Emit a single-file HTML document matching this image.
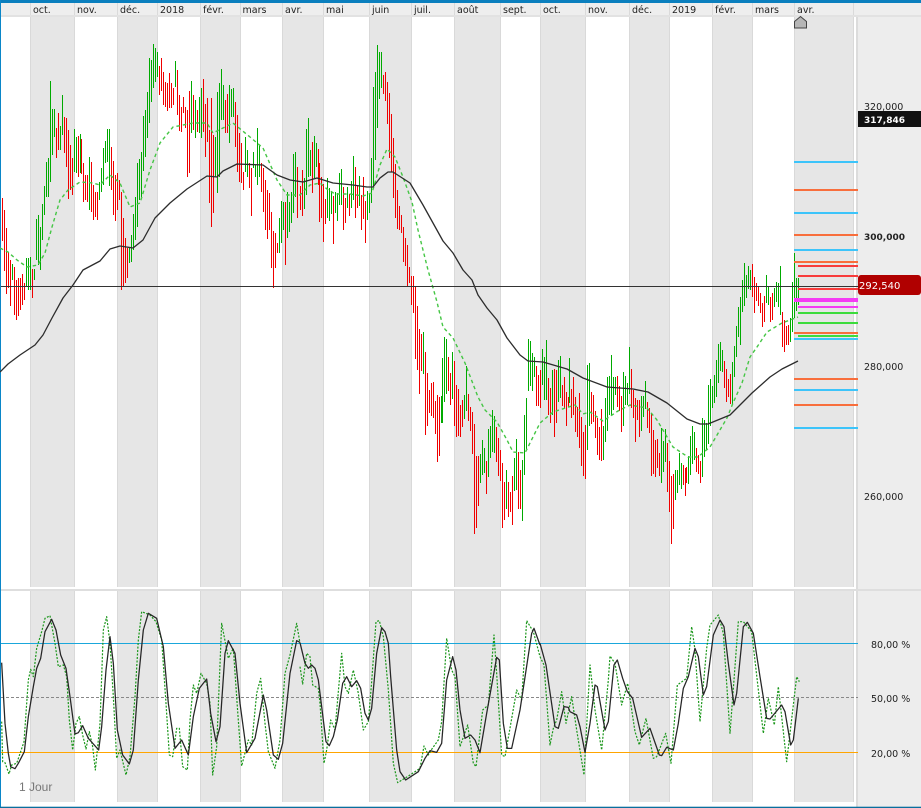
<!DOCTYPE html>
<html><head><meta charset="utf-8"><title>Chart</title>
<style>html,body{margin:0;padding:0;background:#fff;overflow:hidden}svg{display:block}
text{font-family:"DejaVu Sans","Liberation Sans",sans-serif;font-size:9.5px;fill:#222}</style></head>
<body>
<svg width="921" height="808" viewBox="0 0 921 808" xmlns="http://www.w3.org/2000/svg">
<rect width="921" height="808" fill="#fff"/>
<!-- bands -->
<g fill="#e6e6e6">
<rect x="30" y="16" width="45" height="571"/><rect x="117" y="16" width="41" height="571"/><rect x="200" y="16" width="41" height="571"/><rect x="282" y="16" width="42" height="571"/><rect x="369" y="16" width="43" height="571"/><rect x="454" y="16" width="47" height="571"/><rect x="540" y="16" width="46" height="571"/><rect x="629" y="16" width="41" height="571"/><rect x="712" y="16" width="41" height="571"/><rect x="794" y="16" width="60" height="571"/>
<rect x="30" y="591" width="45" height="211"/><rect x="117" y="591" width="41" height="211"/><rect x="200" y="591" width="41" height="211"/><rect x="282" y="591" width="42" height="211"/><rect x="369" y="591" width="43" height="211"/><rect x="454" y="591" width="47" height="211"/><rect x="540" y="591" width="46" height="211"/><rect x="629" y="591" width="41" height="211"/><rect x="712" y="591" width="41" height="211"/><rect x="794" y="591" width="60" height="211"/>
</g>
<path shape-rendering="crispEdges" stroke="#d9d9d9" stroke-width="1" fill="none" d="M30.5 3V587M74.5 3V587M117.5 3V587M157.5 3V587M200.5 3V587M240.5 3V587M282.5 3V587M323.5 3V587M369.5 3V587M411.5 3V587M454.5 3V587M500.5 3V587M540.5 3V587M585.5 3V587M629.5 3V587M669.5 3V587M712.5 3V587M752.5 3V587M794.5 3V587M853.5 3V587M30.5 591V802M74.5 591V802M117.5 591V802M157.5 591V802M200.5 591V802M240.5 591V802M282.5 591V802M323.5 591V802M369.5 591V802M411.5 591V802M454.5 591V802M500.5 591V802M540.5 591V802M585.5 591V802M629.5 591V802M669.5 591V802M712.5 591V802M752.5 591V802M794.5 591V802M853.5 591V802"/>
<!-- panels and axis -->
<rect x="858" y="3" width="63" height="804" fill="#ededed"/>
<rect x="856" y="3" width="2" height="804" fill="#dcdcdc"/>
<rect x="1" y="3" width="920" height="12" fill="#eeeeee"/>
<rect x="1" y="15" width="920" height="2" fill="#e2e2e2"/>
<path shape-rendering="crispEdges" stroke="#dadada" d="M30.5 3V15M74.5 3V15M117.5 3V15M157.5 3V15M200.5 3V15M240.5 3V15M282.5 3V15M323.5 3V15M369.5 3V15M411.5 3V15M454.5 3V15M500.5 3V15M540.5 3V15M585.5 3V15M629.5 3V15M669.5 3V15M712.5 3V15M752.5 3V15M794.5 3V15M853.5 3V15"/>
<rect x="1" y="589" width="920" height="2" fill="#dedede"/>
<rect x="0" y="0" width="921" height="3" fill="#0a7fbe"/>
<rect x="0" y="0" width="1" height="808" fill="#0a86c8"/>
<rect x="0" y="806.7" width="921" height="1.3" fill="#0a6f9e"/>
<g>
<text x="33" y="13">oct.</text><text x="77" y="13">nov.</text><text x="120" y="13">déc.</text><text x="160" y="13">2018</text><text x="203" y="13">févr.</text><text x="242.5" y="13">mars</text><text x="285" y="13">avr.</text><text x="326" y="13">mai</text><text x="372" y="13">juin</text><text x="414" y="13">juil.</text><text x="457" y="13">août</text><text x="503" y="13">sept.</text><text x="543" y="13">oct.</text><text x="588" y="13">nov.</text><text x="632" y="13">déc.</text><text x="672" y="13">2019</text><text x="715" y="13">févr.</text><text x="755" y="13">mars</text><text x="797" y="13">avr.</text>
</g>
<!-- bars -->
<path shape-rendering="crispEdges" fill="none" stroke="#f00000" stroke-width="1" d="M2.5 198V241M4.5 210V271M6.5 228V294M8.5 252V288M10.5 260V306M14.5 267V315M16.5 280V320M18.5 278V316M20.5 278V310M22.5 274V305M24.5 283V300M32.5 269V298M56.5 128V158M58.5 113V150M64.5 117V153M66.5 118V167M68.5 130V199M70.5 145V190M72.5 158V195M78.5 136V177M81.5 139V174M83.5 163V202M85.5 175V200M87.5 175V202M91.5 162V212M93.5 185V220M95.5 192V217M97.5 192V220M111.5 147V190M113.5 161V215M115.5 175V221M117.5 173V210M119.5 180V200M121.5 192V290M123.5 218V287M125.5 238V283M127.5 248V278M159.5 66V95M161.5 58V91M163.5 72V105M165.5 82V107M167.5 83V111M169.5 73V108M171.5 83V108M173.5 88V105M177.5 70V115M179.5 95V131M181.5 107V132M183.5 97V113M185.5 107V128M187.5 110V177M189.5 91V173M193.5 95V130M197.5 110V132M203.5 79V132M205.5 104V157M207.5 98V142M209.5 130V203M211.5 98V227M213.5 135V213M225.5 100V133M227.5 94V133M235.5 102V147M237.5 115V172M239.5 133V182M241.5 143V183M243.5 172V190M249.5 163V188M251.5 168V216M261.5 163V192M263.5 168V212M265.5 180V230M267.5 190V239M269.5 193V230M271.5 212V268M273.5 231V288M275.5 233V268M277.5 243V253M285.5 202V265M297.5 167V218M300.5 186V210M302.5 170V216M312.5 142V193M318.5 149V185M319.5 163V222M321.5 177V218M323.5 184V242M325.5 199V224M333.5 196V244M343.5 187V230M345.5 198V223M349.5 194V216M355.5 167V218M357.5 185V208M361.5 195V230M363.5 177V219M365.5 201V243M383.5 75V94M385.5 72V101M387.5 82V124M389.5 93V158M391.5 114V172M393.5 138V198M395.5 164V218M397.5 190V229M399.5 206V230M401.5 215V233M403.5 227V262M405.5 238V266M407.5 245V286M409.5 267V283M411.5 276V305M413.5 276V313M415.5 287V359M417.5 306V370M419.5 329V394M421.5 334V371M425.5 352V435M427.5 373V426M429.5 390V413M431.5 383V416M433.5 382V418M435.5 401V434M437.5 395V462M439.5 397V456M448.5 357V391M450.5 373V405M454.5 361V426M456.5 385V437M458.5 389V436M460.5 405V437M462.5 400V427M468.5 394V421M470.5 407V431M472.5 412V454M474.5 424V534M476.5 456V528M478.5 456V506M486.5 461V494M496.5 427V462M498.5 438V476M500.5 450V481M502.5 463V528M504.5 482V520M508.5 482V517M510.5 492V512M512.5 476V525M518.5 452V509M520.5 470V509M536.5 366V406M538.5 375V406M540.5 370V408M548.5 378V415M550.5 388V423M554.5 369V437M556.5 370V423M562.5 385V406M564.5 377V409M566.5 392V426M568.5 397V407M571.5 389V418M573.5 377V415M575.5 397V432M577.5 407V437M579.5 393V448M581.5 417V466M583.5 432V476M585.5 425V479M591.5 392V424M593.5 395V422M595.5 411V438M597.5 418V455M599.5 427V460M601.5 409V461M617.5 376V407M619.5 386V411M621.5 396V432M631.5 369V408M633.5 390V418M635.5 398V442M637.5 400V420M639.5 400V437M647.5 402V428M649.5 408V433M651.5 413V476M653.5 430V474M655.5 440V477M657.5 439V468M659.5 453V476M667.5 443V492M669.5 461V512M671.5 476V544M673.5 474V529M683.5 465V485M685.5 468V496M686.5 467V483M696.5 448V472M698.5 455V474M700.5 461V483M724.5 361V388M726.5 369V402M728.5 379V397M730.5 374V404M752.5 264V297M754.5 277V313M756.5 283V301M758.5 286V306M760.5 293V313M762.5 303V327M764.5 296V322M770.5 297V322M772.5 293V320M782.5 312V347M784.5 320V352M786.5 326V345M788.5 325V345"/>
<path shape-rendering="crispEdges" fill="none" stroke="#00aa00" stroke-width="1" d="M12.5 264V280M26.5 258V287M28.5 258V290M30.5 257V290M34.5 269V280M36.5 219V260M38.5 215V265M40.5 227V270M42.5 204V240M44.5 186V215M46.5 162V197M48.5 158V197M50.5 81V182M52.5 109V155M54.5 109V137M60.5 126V150M62.5 95V135M74.5 129V172M76.5 137V173M80.5 134V173M89.5 157V210M99.5 182V200M101.5 168V192M103.5 148V185M105.5 141V163M107.5 129V162M109.5 129V186M129.5 248V263M131.5 235V262M133.5 214V250M135.5 197V240M137.5 163V227M139.5 159V200M141.5 152V197M143.5 116V171M145.5 110V157M147.5 92V138M149.5 58V123M151.5 60V102M153.5 44V88M155.5 48V82M157.5 52V77M175.5 61V87M191.5 81V133M195.5 100V138M199.5 97V133M201.5 88V138M215.5 137V177M217.5 92V193M219.5 83V177M221.5 69V120M223.5 85V120M229.5 85V143M231.5 89V117M233.5 88V117M245.5 137V172M247.5 150V177M253.5 152V168M255.5 165V177M257.5 128V185M259.5 145V177M279.5 218V253M281.5 201V243M283.5 202V230M287.5 192V238M289.5 202V232M291.5 192V223M293.5 154V213M295.5 152V197M304.5 178V209M306.5 129V195M308.5 118V177M310.5 150V176M314.5 136V178M316.5 143V167M327.5 178V218M329.5 188V221M331.5 191V214M335.5 192V213M337.5 193V221M339.5 173V205M341.5 169V205M347.5 187V208M351.5 181V208M353.5 156V200M359.5 176V206M367.5 191V220M369.5 193V213M371.5 158V203M373.5 87V187M375.5 72V160M377.5 45V128M379.5 52V99M381.5 52V88M423.5 332V374M441.5 396V423M442.5 358V423M444.5 337V402M446.5 339V394M452.5 352V399M464.5 395V419M466.5 366V411M480.5 454V483M482.5 440V475M484.5 448V473M488.5 429V477M490.5 426V458M492.5 410V452M494.5 416V453M506.5 470V509M514.5 458V491M516.5 439V490M522.5 460V521M524.5 415V475M526.5 398V449M528.5 339V391M530.5 341V386M532.5 353V391M534.5 357V377M542.5 349V385M544.5 357V400M546.5 340V400M552.5 370V415M558.5 360V402M560.5 356V398M569.5 358V403M587.5 365V450M589.5 363V426M603.5 426V460M605.5 398V442M607.5 377V431M609.5 376V415M611.5 355V415M613.5 377V410M615.5 377V395M623.5 372V426M625.5 376V405M627.5 383V405M629.5 347V394M641.5 396V431M643.5 396V417M645.5 381V409M661.5 428V483M663.5 441V472M665.5 429V462M675.5 470V500M677.5 470V493M679.5 453V485M681.5 463V489M688.5 456V484M690.5 436V475M692.5 426V464M694.5 432V460M702.5 418V477M704.5 420V457M706.5 423V450M708.5 385V444M710.5 379V426M712.5 386V408M714.5 375V403M716.5 360V397M718.5 344V383M720.5 342V371M722.5 350V372M732.5 362V404M734.5 346V377M736.5 326V357M738.5 307V337M740.5 297V345M742.5 280V312M744.5 263V306M746.5 275V298M748.5 266V289M750.5 270V290M766.5 275V303M768.5 287V305M774.5 288V307M776.5 282V302M778.5 283V307M780.5 266V315M790.5 318V342M792.5 282V332M794.5 253V318M796.5 278V311M798.5 278V305"/>
<!-- short MA -->
<polyline fill="none" stroke="#45c645" stroke-width="1.4" stroke-dasharray="3.5 3" points="0,248 8,252 17,260 27,267 38,265 45,253 52,227 60,200 68,190 80,182 93,183 100,185 110,175 120,183 130,207 140,203 150,170 160,143 173,127 193,123 207,123 213,133 233,123 250,137 263,148 277,180 287,195 300,195 310,185 320,183 327,189 335,194 350,194 363,196 372,193 380,165 387,149 395,157 403,177 412,202 418,230 428,270 437,302 443,327 453,338 465,363 478,397 485,410 497,422 507,440 513,452 525,453 540,423 553,412 575,405 583,414 590,412 603,421 612,415 618,411 630,405 647,408 657,420 673,447 688,457 698,457 710,447 727,418 733,403 742,383 750,357 757,347 767,332 782,323 798,317"/>
<!-- long MA -->
<polyline fill="none" stroke="#2c2c2c" stroke-width="1.3" stroke-linejoin="round" points="0,372 8,364 20,355 35,345 43,335 52,318 63,298 73,285 83,270 100,261 110,249 120,246 133,248 143,240 155,218 170,203 187,189 207,176 217,177 223,171 237,164 263,165 277,175 290,180 303,182 317,178 333,183 353,185 367,187 373,187 380,178 388,172 393,172 410,183 423,205 443,241 453,253 463,270 472,280 478,295 487,308 497,320 507,338 520,355 528,361 543,362 567,369 583,378 607,387 633,389 648,392 667,403 687,419 700,424 708,424 730,415 752,393 770,377 782,369 798,361"/>
<rect x="1" y="286" width="857" height="1" fill="#333"/>
<!-- levels -->
<g shape-rendering="crispEdges">
<rect x="794" y="161" width="64" height="2" fill="#3cc4fa"/>
<rect x="794" y="189" width="64" height="2" fill="#f86e3c"/>
<rect x="794" y="212" width="64" height="2" fill="#3cc4fa"/>
<rect x="794" y="234" width="64" height="2" fill="#f86e3c"/>
<rect x="794" y="249" width="64" height="2" fill="#3cc4fa"/>
<rect x="794" y="261" width="64" height="2" fill="#f86e3c"/>
<rect x="798" y="265" width="60" height="2" fill="#f83c3c"/>
<rect x="798" y="275" width="60" height="2" fill="#f83c3c"/>
<rect x="798" y="288" width="60" height="2" fill="#f83c3c"/>
<rect x="794" y="298" width="64" height="4" fill="#f43cf4"/>
<rect x="798" y="306" width="60" height="2" fill="#f43cf4"/>
<rect x="798" y="312" width="60" height="2" fill="#3cdc3c"/>
<rect x="798" y="322" width="60" height="2" fill="#3cdc3c"/>
<rect x="794" y="332" width="64" height="2" fill="#f86e3c"/>
<rect x="798" y="335" width="60" height="2" fill="#3cdc3c"/>
<rect x="794" y="338" width="64" height="2" fill="#3cc4fa"/>
<rect x="794" y="378" width="64" height="2" fill="#f86e3c"/>
<rect x="794" y="389" width="64" height="2" fill="#3cc4fa"/>
<rect x="794" y="404" width="64" height="2" fill="#f86e3c"/>
<rect x="794" y="427" width="64" height="2" fill="#3cc4fa"/>
</g>
<path d="M794.5 28V21.5L800.5 16.5L806.5 21.5V28Z" fill="#b6b6b6" stroke="#444" stroke-width="1"/>
<!-- price labels -->
<text x="864" y="110">320,000</text>
<text x="864" y="240" style="font-weight:bold;font-size:9px">300,000</text>
<text x="864" y="370">280,000</text>
<text x="864" y="500">260,000</text>
<rect x="858" y="111" width="63" height="16" fill="#111"/>
<text x="864" y="123" style="fill:#fff;font-weight:bold;font-size:9px">317,846</text>
<rect x="858" y="275" width="63" height="20" rx="3" fill="#b00000"/>
<text x="859" y="289" style="fill:#fff;font-size:10px">292,540</text>
<text x="871" y="648">80,00 %</text>
<text x="871" y="702">50,00 %</text>
<text x="871" y="757">20,00 %</text>
<!-- stochastic levels -->
<rect x="1" y="643" width="857" height="1" fill="#1aa7db"/>
<path d="M1 697.5H858" stroke="#888" stroke-width="1" stroke-dasharray="3 2" fill="none"/>
<rect x="1" y="752" width="857" height="1" fill="#ffa500"/>
<!-- stochastic dotted -->
<g fill="none" stroke="#1a961a" stroke-width="3.6" stroke-dasharray="6 4.5" stroke-linejoin="round">
<polyline transform="translate(0,580) scale(.33333)" points="5,425 8,545 15,548 27,582 35,555 50,550 62,515 72,485 85,300 92,268 100,290 110,205 125,155 135,115 150,107 165,190 175,260 190,255 200,290 208,420 218,510 228,430 238,410 248,465 258,507 268,455 278,500 286,570 300,430 310,150 320,110 330,190 340,350 350,535 360,510 378,585 390,530 405,350 415,180 425,95 450,105 468,125 485,180 498,370 508,525 518,530 530,445 538,445 548,560 562,570 570,420 580,315 590,340 603,280 620,310 630,370 638,585 650,500 665,130 685,235 700,205 712,380 725,558 745,480 755,495 770,340 782,295 795,430 805,515 825,565 840,480 855,280 870,225 890,130 900,190"/>
<polyline transform="translate(300,590) scale(.33333)" points="0,230 8,282 20,190 30,200 38,285 55,295 60,340 72,520 80,480 92,390 105,420 125,190 135,290 145,310 160,240 175,310 190,420 205,395 215,275 228,95 238,92 250,140 265,300 280,520 293,578 330,555 360,535 372,468 385,495 395,478 415,450 425,395 440,145 455,240 465,260 480,470 503,405 520,520 528,530 548,360 565,345 582,135 590,250 605,495 615,500 650,300 665,330 680,92 700,125 720,200"/>
<polyline transform="translate(540,590) scale(.33333)" points="0,200 12,225 30,465 40,415 50,390 65,305 78,400 95,320 110,420 132,555 150,225 165,360 185,480 205,270 210,198 225,220 245,345 263,280 285,425 298,465 318,385 340,505 350,500 377,430 393,520 412,285 440,265 455,110 465,180 480,395 500,175 510,105 535,75 550,130 570,430 595,95 610,95 635,125 670,430 685,325 703,405 715,290 740,515 770,260 778,275"/>
</g>
<!-- stochastic solid -->
<g fill="none" stroke="#262626" stroke-width="3.8" stroke-linejoin="round">
<polyline transform="translate(0,580) scale(.33333)" points="5,248 15,430 25,520 32,560 45,566 55,550 73,515 85,410 100,320 110,265 122,235 135,155 155,118 168,150 182,225 198,265 210,350 225,462 235,458 248,437 265,475 296,510 305,440 318,270 330,170 340,250 352,450 368,525 388,552 400,510 415,300 430,150 445,100 470,115 490,200 505,370 525,505 545,480 565,525 580,410 598,325 620,297 632,400 648,485 660,440 675,220 685,182 705,220 720,370 740,518 765,475 790,345 800,390 820,525 835,538 848,490 870,280 890,182 900,187"/>
<polyline transform="translate(300,590) scale(.33333)" points="0,158 15,220 25,235 35,225 45,235 55,270 65,350 78,455 88,467 100,440 112,390 128,280 140,260 155,290 170,272 182,295 195,370 205,390 215,355 230,190 245,113 255,125 265,160 272,260 290,480 300,545 317,570 355,545 375,505 390,482 410,487 425,460 440,270 458,200 468,240 480,360 495,445 512,435 525,450 540,488 560,370 590,202 598,210 610,400 622,475 635,475 660,360 695,130 702,115 720,165"/>
<polyline transform="translate(540,590) scale(.33333)" points="0,160 18,225 45,410 55,415 72,350 85,352 90,365 110,375 120,410 135,487 150,400 165,285 172,290 195,420 205,395 222,225 232,210 248,265 262,305 278,325 305,442 330,415 358,495 365,497 380,472 400,480 415,400 430,295 445,260 465,175 475,200 490,315 500,290 520,135 540,90 552,110 565,220 582,345 590,310 610,110 622,97 640,130 660,260 680,385 690,387 725,345 735,365 752,465 760,450 775,325"/>
</g>
<text x="19" y="791" style="font-family:'Liberation Sans',sans-serif;font-size:12px;fill:#777">1 Jour</text>
</svg>
</body></html>
